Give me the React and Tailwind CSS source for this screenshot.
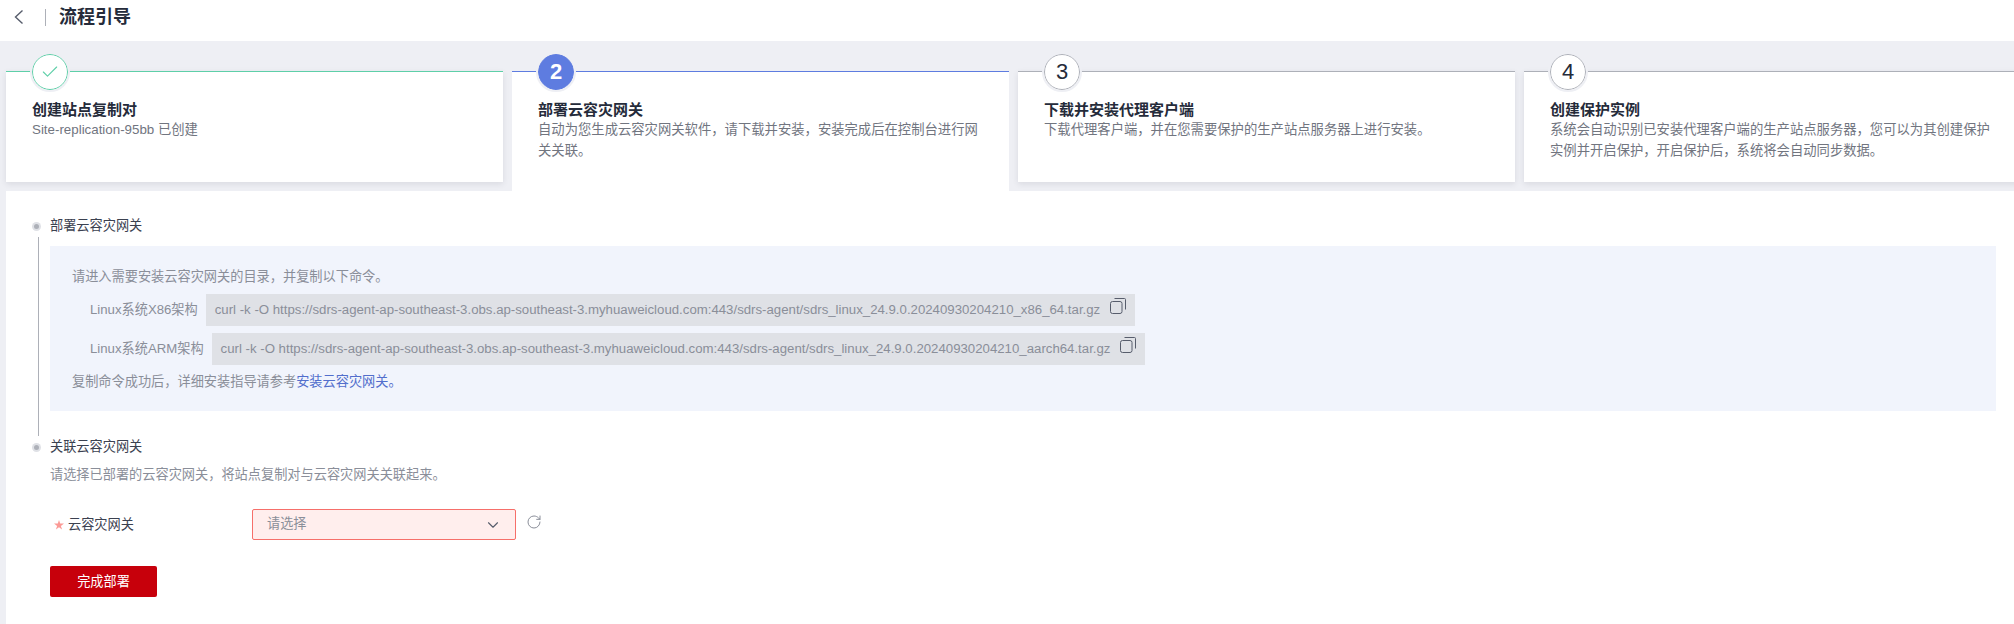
import { Check, ChevronDown, RotateCw } from "lucide-react";

const FONT = "font-['Liberation_Sans','Noto_Sans_CJK_SC',sans-serif]";

const steps = [
  {
    title: "创建站点复制对",
    desc: "Site-replication-95bb 已创建",
    line: "border-t-[#5ecfa8]",
    circle: "border-[#5ecfa8] bg-white",
    mark: <Check size={20} strokeWidth={1.3} className="text-[#5ecfa8]" />,
  },
  {
    title: "部署云容灾网关",
    desc: "自动为您生成云容灾网关软件，请下载并安装，安装完成后在控制台进行网关关联。",
    line: "border-t-[#5e7ce0]",
    circle: "border-[#5e7ce0] bg-[#5e7ce0] text-white",
    mark: "2",
    active: true,
  },
  {
    title: "下载并安装代理客户端",
    desc: "下载代理客户端，并在您需要保护的生产站点服务器上进行安装。",
    line: "border-t-[#adb0b8]",
    circle: "border-[#adb0b8] bg-white text-[#252b3a]",
    mark: "3",
  },
  {
    title: "创建保护实例",
    desc: "系统会自动识别已安装代理客户端的生产站点服务器，您可以为其创建保护实例并开启保护，开启保护后，系统将会自动同步数据。",
    line: "border-t-[#adb0b8]",
    circle: "border-[#adb0b8] bg-white text-[#252b3a]",
    mark: "4",
  },
];

function StepCard({ step }) {
  return (
    <div
      className={`relative w-[497px] shrink-0 border-t-[1.5px] bg-white pl-[26px] pr-[28px] pt-[28px] ${step.line} ${
        step.active ? "h-[120px]" : "h-[111px] shadow-[0_2px_6px_rgba(37,43,58,0.1)]"
      }`}
    >
      <div
        className={`absolute left-[26px] top-[-18px] flex h-[36px] w-[36px] items-center justify-center rounded-full border text-[22px] leading-none outline-2 outline-[#eeeff4] ${step.circle} ${
          step.active ? "font-bold" : ""
        }`}
      >
        {step.mark}
      </div>
      <div className="text-[15px] font-bold leading-[20px] text-[#252b3a]">{step.title}</div>
      <div className="text-[13.33px] leading-[20.5px] text-[#71757f]">{step.desc}</div>
    </div>
  );
}

function CopyIcon() {
  return (
    <svg width="16" height="16" viewBox="0 0 16 16" fill="none" stroke="#575d6c" strokeWidth="1" className="shrink-0">
      <rect x="0.5" y="3.5" width="11.5" height="12" rx="2" />
      <path d="M4.5 0.5h10a1 1 0 0 1 1 1V11.5" />
    </svg>
  );
}

function CommandRow({ label, command, top }) {
  return (
    <div className={`flex h-[32px] items-center ${top}`}>
      <span className="ml-[18px] mr-[8px] whitespace-nowrap text-[13.2px] text-[#8a8e99]">{label}</span>
      <div className="flex h-full items-center bg-[#dfe1e6] pl-[9px] pr-[9px] text-[13.22px] text-[#8a8e99]">
        <span className="whitespace-nowrap">{command}</span>
        <span className="mb-[8px] ml-[10px]">
          <CopyIcon />
        </span>
      </div>
    </div>
  );
}

function SectionTitle({ children }) {
  return (
    <div className="flex h-[22px] items-center">
      <span className="ml-[26px] mr-[9px] flex h-[9px] w-[9px] items-center justify-center rounded-full bg-[#dfe1e6]">
        <span className="h-[5px] w-[5px] rounded-full bg-[#adb0b8]" />
      </span>
      <span className="text-[13.2px] text-[#3b4150]">{children}</span>
    </div>
  );
}

export default function App() {
  return (
    <div className={`h-[624px] w-[2014px] overflow-hidden bg-white ${FONT}`}>
      {/* Header */}
      <header className="flex h-[41px] items-center">
        <svg width="10" height="16" viewBox="0 0 10 16" fill="none" stroke="#575d6c" strokeWidth="1.4" className="mb-[8px] ml-[14px]">
          <path d="M8.5 1.5 1.5 8l7 6.5" />
        </svg>
        <span className="mb-[7px] ml-[21px] h-[17px] w-px bg-[#adb0b8]" />
        <h1 className="mb-[7px] ml-[13px] text-[18px] font-bold leading-none text-[#252b3a]">流程引导</h1>
      </header>

      <div className="h-[583px] bg-[#eeeff4] pl-[6px]">
        {/* Steps */}
        <div className="flex h-[150px] gap-[9px] pt-[30px]">
          {steps.map((step) => (
            <StepCard key={step.title} step={step} />
          ))}
        </div>

        {/* Main Content */}
        <main className="h-[433px] bg-white pt-[24px]">
          <SectionTitle>部署云容灾网关</SectionTitle>
          <div className="ml-[32px] h-[199px] border-l border-[#adb0b8] pl-[11px] pt-[9px]">
            <div className="mr-[18px] h-[165px] bg-[#f1f4fc] pl-[22px] pt-[21px] text-[13.2px] text-[#8a8e99]">
              <div className="h-[27px] leading-[20px]">请进入需要安装云容灾网关的目录，并复制以下命令。</div>
              <CommandRow
                label="Linux系统X86架构"
                command="curl -k -O https://sdrs-agent-ap-southeast-3.obs.ap-southeast-3.myhuaweicloud.com:443/sdrs-agent/sdrs_linux_24.9.0.20240930204210_x86_64.tar.gz"
              />
              <CommandRow
                label="Linux系统ARM架构"
                top="mt-[7px]"
                command="curl -k -O https://sdrs-agent-ap-southeast-3.obs.ap-southeast-3.myhuaweicloud.com:443/sdrs-agent/sdrs_linux_24.9.0.20240930204210_aarch64.tar.gz"
              />
              <div className="mt-[7px] leading-[20px]">
                复制命令成功后，详细安装指导请参考<span className="text-[#526ecc]">安装云容灾网关。</span>
              </div>
            </div>
          </div>

          <SectionTitle>关联云容灾网关</SectionTitle>
          <p className="ml-[44px] mt-[7px] text-[13.2px] leading-[20px] text-[#8a8e99]">
            请选择已部署的云容灾网关，将站点复制对与云容灾网关关联起来。
          </p>

          {/* Form */}
          <div className="mt-[24px] flex h-[31px] items-center">
            <svg width="10" height="10" viewBox="0 0 10 10" className="ml-[48px] mr-[4px] shrink-0" fill="#fb9a96">
              <path d="M5 0 6.2 3.6H10L6.9 5.9 8.1 9.6 5 7.3 1.9 9.6 3.1 5.9 0 3.6H3.8Z" />
            </svg>
            <span className="w-[184px] text-[13.2px] text-[#3b4150]">云容灾网关</span>
            <div className="flex h-full w-[264px] items-center justify-between rounded-[2px] border border-[#f66f6a] bg-[#ffeeed] pl-[14px] pr-[13px] text-[13.2px] text-[#8a8e99]">
              <span className="mb-[2px]">请选择</span>
              <ChevronDown size={18} strokeWidth={1.5} className="text-[#575d6c]" />
            </div>
            <RotateCw size={16} strokeWidth={1.5} className="mb-[6px] ml-[10px] text-[#8a8e99]" />
          </div>

          <button className="ml-[44px] mt-[26px] h-[31px] w-[107px] rounded-[2px] bg-[#c7000b] text-[13.2px] text-white">
            完成部署
          </button>
        </main>
      </div>
    </div>
  );
}
